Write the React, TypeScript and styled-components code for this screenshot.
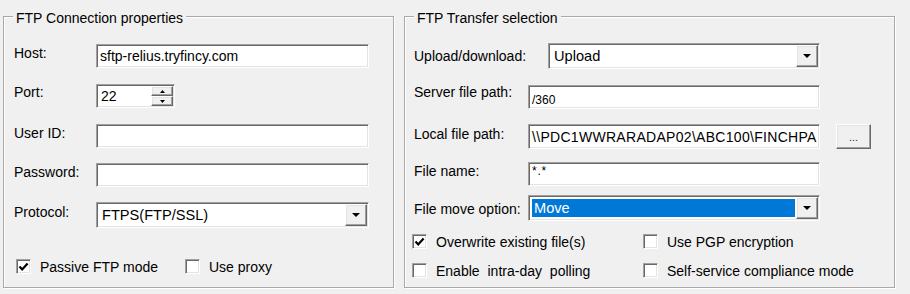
import React from "react";
import styled, { createGlobalStyle, css } from "styled-components";

const GlobalStyle = createGlobalStyle`
  html, body { margin: 0; padding: 0; background: #f0f0f0; }
  body {
    font-family: "Liberation Sans", Arial, sans-serif;
    font-size: 14px;
    color: #000;
  }
`;

const sunken = css`
  border: 1px solid;
  border-color: #a0a0a0 #ffffff #ffffff #a0a0a0;
  box-shadow: inset 1px 1px 0 #696969, inset -1px -1px 0 #e3e3e3;
`;

const raised = css`
  border: 1px solid;
  border-color: #ffffff #696969 #696969 #ffffff;
  box-shadow: inset -1px -1px 0 #a0a0a0, inset 1px 1px 0 #e3e3e3;
  background: #f0f0f0;
`;

const Page = styled.div`
  display: flex;
  gap: 10px;
  padding: 16px 0 0 3px;
  height: 294px;
  box-sizing: border-box;
`;

const Group = styled.section<{ $w: number; $pl: number; $pt: number }>`
  position: relative;
  box-sizing: border-box;
  width: ${(p) => p.$w}px;
  height: 272px;
  border: 1px solid #a9a9a9;
  box-shadow: inset 1px 1px 0 #fff, 1px 1px 0 #fff;
  padding: ${(p) => p.$pt}px 0 0 ${(p) => p.$pl}px;
  display: flex;
  flex-direction: column;
`;

const GroupTitle = styled.span`
  position: absolute;
  top: -7px;
  left: 9px;
  padding: 0 3px;
  background: #f0f0f0;
  line-height: 16px;
  white-space: nowrap;
`;

const Row = styled.div<{ $mt?: number }>`
  display: flex;
  align-items: center;
  margin-top: ${(p) => p.$mt ?? 0}px;
`;

const Label = styled.span<{ $w: number; $up?: number }>`
  width: ${(p) => p.$w}px;
  flex-shrink: 0;
  white-space: nowrap;
  line-height: 16px;
  padding-bottom: ${(p) => Math.max(0, (p.$up ?? 0) * 2)}px;
  padding-top: ${(p) => Math.max(0, -(p.$up ?? 0) * 2)}px;
`;

const TextField = styled.div<{
  $w: number;
  $h?: number;
  $fs?: number;
  $ls?: number;
  $align?: string;
}>`
  ${sunken};
  box-sizing: border-box;
  width: ${(p) => p.$w}px;
  height: ${(p) => p.$h ?? 24}px;
  background: #fff;
  display: flex;
  align-items: ${(p) => p.$align ?? "center"};
  padding: 0 2px 0 3px;
  overflow: hidden;
  white-space: nowrap;
  font-size: ${(p) => p.$fs ?? 14}px;
  letter-spacing: ${(p) => p.$ls ?? 0}px;
  line-height: 16px;
`;

const SpinField = styled.div`
  ${sunken};
  box-sizing: border-box;
  width: 79px;
  height: 24px;
  background: #fff;
  display: flex;
  padding: 1px;
`;

const SpinText = styled.div`
  flex: 1;
  display: flex;
  align-items: center;
  padding-left: 3px;
`;

const SpinButtons = styled.div`
  width: 22px;
  display: flex;
  flex-direction: column;
`;

const SpinButton = styled.div`
  ${raised};
  flex: 1;
  box-sizing: border-box;
  display: flex;
  align-items: center;
  justify-content: center;
`;

const Combo = styled.div<{ $w: number }>`
  ${sunken};
  box-sizing: border-box;
  width: ${(p) => p.$w}px;
  height: 26px;
  background: #fff;
  display: flex;
  padding: 1px;
`;

const ComboValue = styled.div<{ $selected?: boolean }>`
  flex: 1;
  display: flex;
  align-items: center;
  margin: 2px 1px 2px 2px;
  padding-left: 2px;
  white-space: nowrap;
  overflow: hidden;
  font-size: 14.6px;
  background: ${(p) => (p.$selected ? "#0078d7" : "transparent")};
  color: ${(p) => (p.$selected ? "#fff" : "#000")};
`;

const DropButton = styled.div`
  ${raised};
  width: 22px;
  box-sizing: border-box;
  display: flex;
  align-items: center;
  justify-content: center;
`;

const BrowseButton = styled.div`
  ${raised};
  box-sizing: border-box;
  width: 35px;
  height: 25px;
  margin-left: 16px;
  display: flex;
  align-items: flex-end;
  justify-content: center;
  padding-bottom: 5px;
  font-size: 11px;
  line-height: 11px;
  color: #333;
`;

const CheckRow = styled.div<{ $mt: number; $ml: number }>`
  display: flex;
  align-items: center;
  height: 17px;
  margin-top: ${(p) => p.$mt}px;
  margin-left: ${(p) => p.$ml}px;
`;

const CheckItem = styled.label<{ $w?: number; $ws?: number }>`
  display: flex;
  align-items: center;
  gap: 9px;
  width: ${(p) => (p.$w ? `${p.$w}px` : "auto")};
  flex-shrink: 0;
  white-space: nowrap;
  line-height: 16px;
  word-spacing: ${(p) => p.$ws ?? 0}px;
`;

const CheckBox = styled.span`
  ${sunken};
  box-sizing: border-box;
  width: 15px;
  height: 15px;
  background: #fff;
  display: flex;
  align-items: center;
  justify-content: center;
`;

const Arrow = ({ dir = "down", w = 8, h = 4 }: { dir?: "down" | "up"; w?: number; h?: number }) => (
  <svg width={w} height={h} viewBox={`0 0 ${w} ${h}`}>
    {dir === "down" ? (
      <path d={`M0 0 H${w} L${w / 2} ${h} Z`} fill="#000" />
    ) : (
      <path d={`M0 ${h} H${w} L${w / 2} 0 Z`} fill="#000" />
    )}
  </svg>
);

const Check = ({ checked }: { checked?: boolean }) => (
  <CheckBox>
    {checked && (
      <svg width="11" height="11" viewBox="0 0 11 11">
        <path d="M1.5 5.5 L4.2 8.4 L9.6 2.4" fill="none" stroke="#000" strokeWidth="2.2" />
      </svg>
    )}
  </CheckBox>
);

const ComboBox = ({ w, value, selected }: { w: number; value: string; selected?: boolean }) => (
  <Combo $w={w}>
    <ComboValue $selected={selected}>{value}</ComboValue>
    <DropButton>
      <Arrow />
    </DropButton>
  </Combo>
);

export default function App() {
  return (
    <>
      <GlobalStyle />
      <Page>
        <Group $w={391} $pl={10} $pt={27}>
          <GroupTitle>FTP Connection properties</GroupTitle>
          <Row>
            <Label $w={82} $up={3}>Host:</Label>
            <TextField $w={273}>sftp-relius.tryfincy.com</TextField>
          </Row>
          <Row $mt={16}>
            <Label $w={82} $up={4}>Port:</Label>
            <SpinField>
              <SpinText>22</SpinText>
              <SpinButtons>
                <SpinButton>
                  <Arrow dir="up" w={5} h={3} />
                </SpinButton>
                <SpinButton>
                  <Arrow w={5} h={3} />
                </SpinButton>
              </SpinButtons>
            </SpinField>
          </Row>
          <Row $mt={16}>
            <Label $w={82} $up={3}>User ID:</Label>
            <TextField $w={273} />
          </Row>
          <Row $mt={15}>
            <Label $w={82} $up={3}>Password:</Label>
            <TextField $w={273} />
          </Row>
          <Row $mt={15}>
            <Label $w={82} $up={3}>Protocol:</Label>
            <ComboBox w={273} value="FTPS(FTP/SSL)" />
          </Row>
          <CheckRow $mt={30} $ml={2}>
            <CheckItem $w={169}>
              <Check checked />
              Passive FTP mode
            </CheckItem>
            <CheckItem>
              <Check />
              Use proxy
            </CheckItem>
          </CheckRow>
        </Group>

        <Group $w={491} $pl={9} $pt={26}>
          <GroupTitle>FTP Transfer selection</GroupTitle>
          <Row>
            <Label $w={134}>Upload/download:</Label>
            <ComboBox w={272} value="Upload" />
          </Row>
          <Row $mt={15}>
            <Label $w={114} $up={5}>Server file path:</Label>
            <TextField $w={292} $fs={12} $align="flex-end">
              /360
            </TextField>
          </Row>
          <Row $mt={14}>
            <Label $w={114} $up={3}>Local file path:</Label>
            <TextField $w={292} $h={25} $ls={0.3}>
              {"\\\\PDC1WWRARADAP02\\ABC100\\FINCHPA"}
            </TextField>
            <BrowseButton>...</BrowseButton>
          </Row>
          <Row $mt={13}>
            <Label $w={114} $up={3}>File name:</Label>
            <TextField $w={292} $fs={12} $ls={0.8} $align="flex-start">
              *.*
            </TextField>
          </Row>
          <Row $mt={9}>
            <Label $w={114} $up={-1}>File move option:</Label>
            <ComboBox w={292} value="Move" selected />
          </Row>
          <CheckRow $mt={12} $ml={-2}>
            <CheckItem $w={231}>
              <Check checked />
              Overwrite existing file(s)
            </CheckItem>
            <CheckItem>
              <Check />
              Use PGP encryption
            </CheckItem>
          </CheckRow>
          <CheckRow $mt={12} $ml={-2}>
            <CheckItem $w={231} $ws={4}>
              <Check />
              Enable intra-day polling
            </CheckItem>
            <CheckItem>
              <Check />
              Self-service compliance mode
            </CheckItem>
          </CheckRow>
        </Group>
      </Page>
    </>
  );
}
